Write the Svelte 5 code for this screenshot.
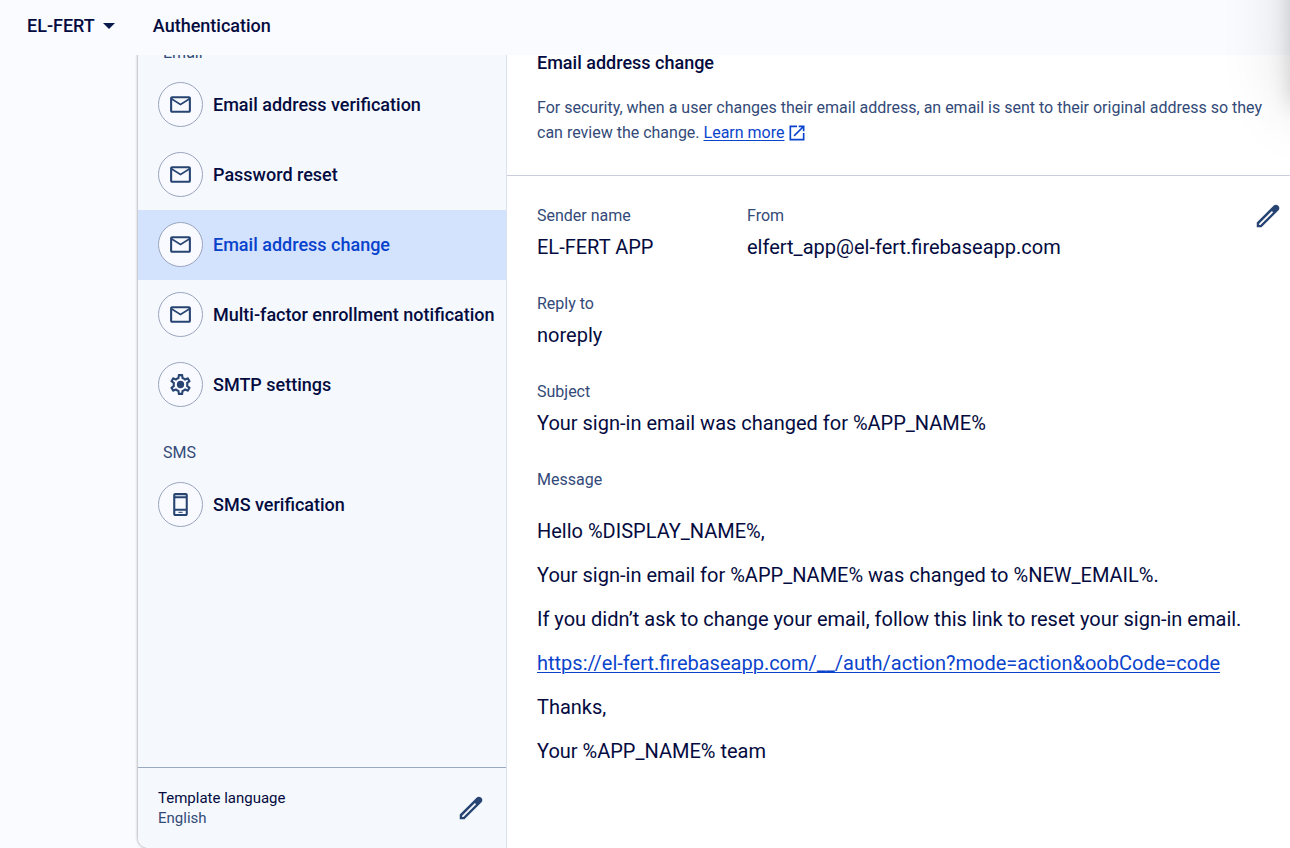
<script>
  const emailTemplates = [
    { label: 'Email address verification', icon: 'mail' },
    { label: 'Password reset', icon: 'mail' },
    { label: 'Email address change', icon: 'mail', active: true },
    { label: 'Multi-factor enrollment notification', icon: 'mail' },
    { label: 'SMTP settings', icon: 'gear' }
  ];
  const smsTemplates = [{ label: 'SMS verification', icon: 'phone' }];
  const message = [
    { text: 'Hello %DISPLAY_NAME%,' },
    { text: 'Your sign-in email for %APP_NAME% was changed to %NEW_EMAIL%.' },
    { text: 'If you didn’t ask to change your email, follow this link to reset your sign-in email.' },
    { text: 'https://el-fert.firebaseapp.com/__/auth/action?mode=action&oobCode=code', link: true },
    { text: 'Thanks,' },
    { text: 'Your %APP_NAME% team' }
  ];
</script>

{#snippet icon(name)}
  <svg class="icon" viewBox="0 0 24 24" aria-hidden="true">
    {#if name === 'mail'}
      <path d="M22 6c0-1.100-.9-2-2-2H4c-1.100 0-2 .9-2 2v12c0 1.100.9 2 2 2h16c1.100 0 2-.9 2-2V6zm-2 0l-8 5-8-5h16zm0 12H4V8l8 5 8-5v10z" />
    {:else if name === 'gear'}
      <path d="M19.430 12.980c.04-.32.07-.64.07-.98s-.03-.66-.07-.98l2.110-1.650c.19-.15.24-.42.12-.64l-2-3.460c-.09-.16-.26-.25-.44-.25-.06 0-.12.010-.17.030l-2.490 1c-.52-.4-1.080-.73-1.690-.98l-.38-2.650C14.460 2.180 14.250 2 14 2h-4c-.25 0-.46.18-.49.42l-.38 2.650c-.61.25-1.170.59-1.690.98l-2.490-1c-.06-.02-.12-.03-.18-.03-.17 0-.34.09-.43.25l-2 3.460c-.13.22-.07.49.12.64l2.110 1.650c-.04.32-.07.65-.07.98s.03.66.07.98l-2.110 1.650c-.19.15-.24.42-.12.64l2 3.460c.09.16.26.25.44.25.06 0 .12-.01.17-.03l2.490-1c.52.4 1.080.73 1.690.98l.38 2.650c.03.24.24.42.49.42h4c.25 0 .46-.18.49-.42l.38-2.650c.61-.25 1.170-.59 1.690-.98l2.490 1c.06.02.12.03.18.03.17 0 .34-.09.43-.25l2-3.460c.12-.22.07-.49-.12-.64l-2.110-1.650zm-1.980-1.710c.04.31.05.52.05.73s-.02.43-.05.73l-.14 1.130.89.7 1.080.84-.7 1.210-1.270-.51-1.040-.42-.9.68c-.43.32-.84.56-1.250.73l-1.060.43-.16 1.130-.2 1.350h-1.400l-.19-1.350-.16-1.130-1.060-.43c-.43-.18-.83-.41-1.230-.71l-.91-.7-1.060.43-1.270.51-.7-1.210 1.080-.84.89-.7-.14-1.130c-.03-.31-.05-.54-.05-.74s.02-.43.05-.73l.14-1.130-.89-.7-1.080-.84.7-1.210 1.270.51 1.040.42.9-.68c.43-.32.84-.56 1.250-.73l1.060-.43.16-1.130.2-1.350h1.390l.19 1.350.16 1.130 1.060.43c.43.18.83.41 1.230.71l.91.7 1.060-.43 1.270-.51.7 1.210-1.070.85-.89.7.14 1.130z" />
      <circle cx="12" cy="12" r="3.500" />
    {:else if name === 'phone'}
      <path d="M17 1H7C5.900 1 5 1.900 5 3v18c0 1.100.9 2 2 2h10c1.100 0 2-.9 2-2V3c0-1.100-.9-2-2-2zm0 20H7v-3h10v3zm0-5H7V6h10v10zm0-12H7V3h10v1z" />
      <rect x="10" y="19" width="4" height="1" />
    {:else if name === 'pencil'}
      <path d="M3 17.250V21h3.750L20.400 7.350c.9-.9.900-2.400 0-3.300l-.450-.450c-.9-.9-2.400-.9-3.300 0zM5.900 19.200H4.900v-1l10.200-10.200 1 1z" fill-rule="evenodd" />
    {:else}
      <path d="M19 19H5V5h7V3H3v18h18v-9h-2v7zM14 3v2h3.590l-9.830 9.830 1.410 1.410L19 6.410V10h2V3h-7z" />
    {/if}
  </svg>
{/snippet}

{#snippet list(items)}
  <ul>
    {#each items as item}
      <li>
        <button class="item" class:active={item.active} aria-current={item.active ? 'page' : undefined}>
          <span class="badge">{@render icon(item.icon)}</span>
          {item.label}
        </button>
      </li>
    {/each}
  </ul>
{/snippet}

<div class="page">
  <header>
    <button class="project">EL-FERT
      <svg viewBox="0 0 12 6" aria-hidden="true"><path d="M0 0h12L6 6z" /></svg>
    </button>
    <h1>Authentication</h1>
  </header>

  <main>
    <section class="card">
      <nav>
        <h2 class="group">Email</h2>
        {@render list(emailTemplates)}
        <h2 class="group">SMS</h2>
        {@render list(smsTemplates)}
        <div class="language">
          <div><p>Template language</p><p class="muted">English</p></div>
          <button class="edit" aria-label="Edit template language">{@render icon('pencil')}</button>
        </div>
      </nav>

      <article>
        <div class="intro">
          <h2>Email address change</h2>
          <p>
            For security, when a user changes their email address, an email is sent to their original address so they
            can review the change. <a href="#learn">Learn more</a>{@render icon('external')}
          </p>
        </div>
        <div class="details">
          <dl>
            <div><dt>Sender name</dt><dd>EL-FERT APP</dd></div>
            <div><dt>From</dt><dd>elfert_app@el-fert.firebaseapp.com</dd></div>
            <div class="full"><dt>Reply to</dt><dd>noreply</dd></div>
            <div class="full"><dt>Subject</dt><dd>Your sign-in email was changed for %APP_NAME%</dd></div>
          </dl>
          <button class="edit" aria-label="Edit template">{@render icon('pencil')}</button>
          <div class="message">
            <h3>Message</h3>
            {#each message as line}
              <p>{#if line.link}<a href="#action">{line.text}</a>{:else}{line.text}{/if}</p>
            {/each}
          </div>
        </div>
      </article>
    </section>
  </main>
  <div class="drawer"></div>
</div>

<style>
  :global(body) { margin: 0; background: #fafbff; }
  .page {
    height: 100vh; display: flex; flex-direction: column; overflow: hidden; position: relative;
    font-family: Roboto, 'Liberation Sans', sans-serif; color: #040b40; font-size: 20px; line-height: 24px;
  }
  h1, h2, h3, p, ul, dl, dd { margin: 0; padding: 0; }
  button { font: inherit; color: inherit; background: none; border: 0; padding: 0; cursor: pointer; }
  a { color: #0b44cc; text-underline-offset: 2px; text-decoration-thickness: 1px; }
  .icon { width: 25px; height: 25px; fill: #274472; flex: none; display: block; }

  header {
    flex: none; height: 55px; box-sizing: border-box; padding: 0 27px 4px; display: flex; align-items: center;
    gap: 38px; background: #fafbff; position: relative; z-index: 1;
  }
  header h1, .project { font-size: 18px; font-weight: 500; }
  .project { display: flex; align-items: center; gap: 8px; }
  .project svg { width: 12px; height: 6px; fill: #0b1a4d; }

  main { flex: 1; min-height: 0; display: flex; margin-top: -35px; padding-left: 138px; }
  .card {
    flex: 1; min-width: 0; display: flex; background: #fff; border-radius: 10px 0 0 10px;
    box-shadow: 0 0 3px rgba(0, 0, 0, 0.5);
  }
  nav {
    width: 368px; flex: none; display: flex; flex-direction: column; background: #f5f9fe;
    border-right: 1px solid #dae2ee; border-radius: 10px 0 0 10px;
  }
  .group { font-size: 16px; font-weight: 400; line-height: 20px; padding: 23px 25px 7px; color: #334a78; }
  ul { list-style: none; }
  .item {
    width: 100%; height: 70px; display: flex; align-items: center; gap: 10px; padding: 0 20px 1px;
    font-size: 18px; font-weight: 500; white-space: nowrap;
  }
  .item.active { background: #d3e2fd; color: #0842cc; }
  .badge {
    width: 43px; height: 43px; flex: none; display: grid; place-items: center; border: 1px solid #9aa5bd;
    border-radius: 50%; background: #f8faff;
  }
  .language {
    margin-top: auto; height: 80px; border-top: 1px solid #9aa9c2; padding: 0 23px 0 20px;
    display: flex; align-items: center; justify-content: space-between; font-size: 15px; line-height: 20px;
  }
  .muted { color: #334a78; }

  article { flex: 1; min-width: 0; }
  .intro { padding: 30px 15px 30px 30px; border-bottom: 1px solid #c9cddd; }
  .intro h2 { font-size: 18px; line-height: 25px; font-weight: 500; }
  .intro p { margin-top: 20px; font-size: 16px; line-height: 25px; color: #334a78; }
  .intro .icon { display: inline-block; width: 20px; height: 20px; margin-left: 2px; vertical-align: -5px; fill: #0b44cc; }
  .details { padding: 25px 10px 30px 30px; display: grid; grid-template-columns: 1fr auto; align-items: start; }
  dl { display: grid; grid-template-columns: 180px 1fr; gap: 35px 30px; padding-top: 5px; }
  .full, .message { grid-column: 1 / -1; }
  dt, h3 { font-size: 16px; line-height: 20px; font-weight: 400; color: #334a78; }
  dd { margin-top: 9px; }
  .edit .icon { width: 30px; height: 30px; }
  .edit { margin-right: -3px; }
  .message { margin-top: 35px; }
  .message p { margin-top: 20px; }
  .message h3 + p { margin-top: 29px; }

  .drawer {
    position: absolute; z-index: 2; left: 100%; top: -100px; width: 300px; height: 205px;
    box-shadow: 0 0 20px rgba(0, 0, 0, 0.14), 0 0 70px rgba(0, 0, 0, 0.14); pointer-events: none;
  }
</style>
